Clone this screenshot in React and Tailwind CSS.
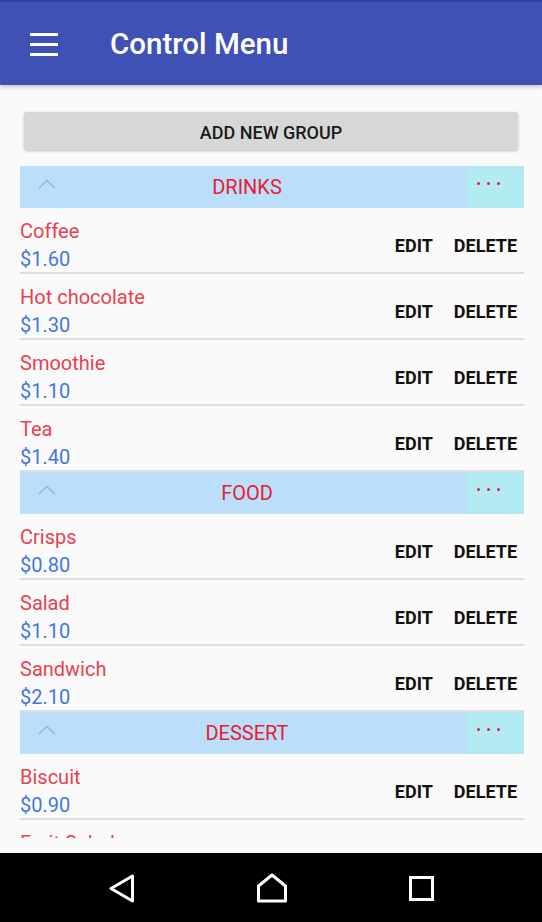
import React from "react";

const groups = [
  {
    title: "DRINKS",
    items: [
      ["Coffee", "$1.60"],
      ["Hot chocolate", "$1.30"],
      ["Smoothie", "$1.10"],
      ["Tea", "$1.40"],
    ],
  },
  {
    title: "FOOD",
    items: [
      ["Crisps", "$0.80"],
      ["Salad", "$1.10"],
      ["Sandwich", "$2.10"],
    ],
  },
  {
    title: "DESSERT",
    items: [
      ["Biscuit", "$0.90"],
      ["Fruit Salad", "$1.50"],
    ],
  },
];

function GroupHeader({ title }) {
  return (
    <div className="flex h-[42px] bg-[#bbdefb]">
      <div className="flex w-[54px] items-center pl-[18px] pb-[6px]">
        <svg width="18" height="10" viewBox="0 0 18 10" fill="none">
          <path d="M1 9 L9 1.5 L17 9" stroke="#9db4d2" strokeWidth="1.6" />
        </svg>
      </div>
      <div className="flex flex-1 items-center justify-center pr-[47px] text-[20px] leading-none text-[#e8202e]">
        {title}
      </div>
      <div className="flex w-[57px] items-center gap-[7px] bg-[#b2ebf2] pl-[10px] pb-[7px]">
        <span className="block h-[3px] w-[3px] rounded-full bg-[#e0203a]" />
        <span className="block h-[3px] w-[3px] rounded-full bg-[#e0203a]" />
        <span className="block h-[3px] w-[3px] rounded-full bg-[#e0203a]" />
      </div>
    </div>
  );
}

function Item({ name, price }) {
  return (
    <div className="flex h-[66px] border-b-2 border-[#dedede]">
      <div className="flex-1 pt-[9px] text-[20px] leading-[28px]">
        <div className="text-[#e8414f]">{name}</div>
        <div className="text-[#4477dd]">{price}</div>
      </div>
      <div className="flex items-center gap-[21px] pt-[10px] pr-[7px] text-[18px] font-bold text-[#111111]">
        <span>EDIT</span>
        <span>DELETE</span>
      </div>
    </div>
  );
}

export default function App() {
  return (
    <div
      className="flex h-[922px] w-[542px] flex-col overflow-hidden bg-[#fafafa]"
      style={{ fontFamily: "Roboto, 'Liberation Sans', sans-serif" }}
    >
      <header className="relative z-10 flex h-[85px] shrink-0 items-center border-t-2 border-[#34449e] bg-[#3f51b5] shadow-[0_2px_4px_rgba(0,0,0,0.22)]">
        <div className="ml-[30px] flex w-[28px] flex-col gap-[7px] pt-[1px]">
          <span className="block h-[3px] w-full bg-white" />
          <span className="block h-[3px] w-full bg-white" />
          <span className="block h-[3px] w-full bg-white" />
        </div>
        <h1 className="ml-[52px] pt-[3px] text-[29.5px] font-medium leading-none text-white">Control Menu</h1>
      </header>

      <main className="flex-1 overflow-hidden">
        <div className="mx-[24px] mt-[27px] flex h-[38px] items-center justify-center rounded-[3px] bg-[#d6d7d7] pt-[2px] text-[18px] font-medium text-[#1a1a1a] shadow-[0_1px_3px_rgba(0,0,0,0.25)]">
          ADD NEW GROUP
        </div>
        <div className="ml-[20px] mr-[18px] mt-[16px] h-[672px] overflow-hidden">
          {groups.map((g) => (
            <div key={g.title}>
              <GroupHeader title={g.title} />
              {g.items.map(([n, p]) => (
                <Item key={n} name={n} price={p} />
              ))}
            </div>
          ))}
        </div>
      </main>

      <nav className="flex h-[69px] shrink-0 items-center justify-center gap-[121px] bg-black pt-[1px]">
        <svg width="27" height="29" viewBox="0 0 27 29" fill="none">
          <path d="M24.5 2 L3 14.5 L24.5 27 Z" stroke="white" strokeWidth="3" strokeLinejoin="round" />
        </svg>
        <svg width="32" height="30" viewBox="0 0 32 30" fill="none">
          <path d="M2.5 13 L16 2 L29.5 13 L29.5 28 L2.5 28 Z" stroke="white" strokeWidth="3" strokeLinejoin="round" />
        </svg>
        <svg width="25" height="25" viewBox="0 0 25 25" fill="none">
          <rect x="1.5" y="1.5" width="22" height="22" stroke="white" strokeWidth="3" />
        </svg>
      </nav>
    </div>
  );
}
